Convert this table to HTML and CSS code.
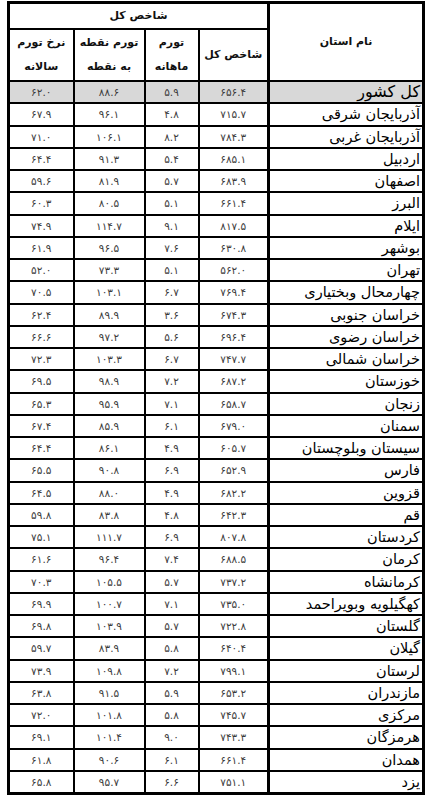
FILE: index.html
```html
<!DOCTYPE html>
<html lang="fa">
<head>
<meta charset="utf-8">
<title>شاخص کل</title>
<link rel="stylesheet" href="styles.css">
</head>
<body>
<table class="tbl" dir="rtl">
  <colgroup>
    <col class="c-name"><col class="c-idx"><col class="c-mon"><col class="c-pt"><col class="c-yr">
  </colgroup>
  <thead>
    <tr class="h1">
      <th class="h-name" rowspan="2">نام استان</th>
      <th colspan="4">شاخص کل</th>
    </tr>
    <tr class="h2">
      <th>شاخص کل</th>
      <th>تورم<br>ماهانه</th>
      <th>تورم نقطه<br>به نقطه</th>
      <th>نرخ تورم<br>سالانه</th>
    </tr>
  </thead>
  <tbody>
    <tr class="total"><td class="name">کل کشور</td><td>۶۵۶.۴</td><td>۵.۹</td><td>۸۸.۶</td><td>۶۲.۰</td></tr>
    <tr><td class="name">آذربایجان شرقی</td><td>۷۱۵.۷</td><td>۴.۸</td><td>۹۶.۱</td><td>۶۷.۹</td></tr>
    <tr><td class="name">آذربایجان غربی</td><td>۷۸۴.۳</td><td>۸.۲</td><td>۱۰۶.۱</td><td>۷۱.۰</td></tr>
    <tr><td class="name">اردبیل</td><td>۶۸۵.۱</td><td>۵.۴</td><td>۹۱.۳</td><td>۶۴.۴</td></tr>
    <tr><td class="name">اصفهان</td><td>۶۸۳.۹</td><td>۵.۷</td><td>۸۱.۹</td><td>۵۹.۶</td></tr>
    <tr><td class="name">البرز</td><td>۶۶۱.۴</td><td>۵.۱</td><td>۸۰.۵</td><td>۶۰.۳</td></tr>
    <tr><td class="name">ایلام</td><td>۸۱۷.۵</td><td>۹.۱</td><td>۱۱۴.۷</td><td>۷۴.۹</td></tr>
    <tr><td class="name">بوشهر</td><td>۶۳۰.۸</td><td>۷.۶</td><td>۹۶.۵</td><td>۶۱.۹</td></tr>
    <tr><td class="name">تهران</td><td>۵۶۲.۰</td><td>۵.۱</td><td>۷۳.۳</td><td>۵۲.۰</td></tr>
    <tr><td class="name">چهارمحال وبختیاری</td><td>۷۶۹.۴</td><td>۶.۷</td><td>۱۰۳.۱</td><td>۷۰.۵</td></tr>
    <tr><td class="name">خراسان جنوبی</td><td>۶۷۴.۳</td><td>۳.۶</td><td>۸۹.۹</td><td>۶۲.۴</td></tr>
    <tr><td class="name">خراسان رضوی</td><td>۶۹۶.۴</td><td>۵.۶</td><td>۹۷.۲</td><td>۶۶.۶</td></tr>
    <tr><td class="name">خراسان شمالی</td><td>۷۴۷.۷</td><td>۶.۷</td><td>۱۰۳.۳</td><td>۷۲.۳</td></tr>
    <tr><td class="name">خوزستان</td><td>۶۸۷.۲</td><td>۷.۲</td><td>۹۸.۹</td><td>۶۹.۵</td></tr>
    <tr><td class="name">زنجان</td><td>۶۵۸.۷</td><td>۷.۱</td><td>۹۵.۹</td><td>۶۵.۳</td></tr>
    <tr><td class="name">سمنان</td><td>۶۷۹.۰</td><td>۶.۱</td><td>۸۵.۹</td><td>۶۷.۴</td></tr>
    <tr><td class="name">سیستان وبلوچستان</td><td>۶۰۵.۷</td><td>۴.۹</td><td>۸۶.۱</td><td>۶۴.۴</td></tr>
    <tr><td class="name">فارس</td><td>۶۵۲.۹</td><td>۶.۹</td><td>۹۰.۸</td><td>۶۵.۵</td></tr>
    <tr><td class="name">قزوین</td><td>۶۸۲.۲</td><td>۴.۹</td><td>۸۸.۰</td><td>۶۴.۵</td></tr>
    <tr><td class="name">قم</td><td>۶۴۲.۳</td><td>۴.۸</td><td>۸۳.۸</td><td>۵۹.۸</td></tr>
    <tr><td class="name">کردستان</td><td>۸۰۷.۸</td><td>۶.۹</td><td>۱۱۱.۷</td><td>۷۵.۱</td></tr>
    <tr><td class="name">کرمان</td><td>۶۸۸.۵</td><td>۷.۴</td><td>۹۶.۴</td><td>۶۱.۶</td></tr>
    <tr><td class="name">کرمانشاه</td><td>۷۳۷.۲</td><td>۵.۷</td><td>۱۰۵.۵</td><td>۷۰.۳</td></tr>
    <tr><td class="name">کهگیلویه وبویراحمد</td><td>۷۳۵.۰</td><td>۷.۱</td><td>۱۰۰.۷</td><td>۶۹.۹</td></tr>
    <tr><td class="name">گلستان</td><td>۷۲۲.۸</td><td>۵.۷</td><td>۱۰۳.۹</td><td>۶۹.۸</td></tr>
    <tr><td class="name">گیلان</td><td>۶۴۰.۴</td><td>۵.۸</td><td>۸۳.۹</td><td>۵۹.۷</td></tr>
    <tr><td class="name">لرستان</td><td>۷۹۹.۱</td><td>۷.۲</td><td>۱۰۹.۸</td><td>۷۳.۹</td></tr>
    <tr><td class="name">مازندران</td><td>۶۵۳.۲</td><td>۵.۹</td><td>۹۱.۵</td><td>۶۳.۸</td></tr>
    <tr><td class="name">مرکزی</td><td>۷۴۵.۷</td><td>۵.۸</td><td>۱۰۱.۸</td><td>۷۲.۰</td></tr>
    <tr><td class="name">هرمزگان</td><td>۷۴۳.۳</td><td>۹.۰</td><td>۱۰۱.۴</td><td>۶۹.۱</td></tr>
    <tr><td class="name">همدان</td><td>۶۶۱.۴</td><td>۶.۱</td><td>۹۰.۶</td><td>۶۱.۸</td></tr>
    <tr><td class="name">یزد</td><td>۷۵۱.۱</td><td>۶.۶</td><td>۹۵.۷</td><td>۶۵.۸</td></tr>
  </tbody>
</table>
</body>
</html>
```

FILE: styles.css
```css
html, body {
  margin: 0;
  padding: 0;
  background: #ffffff;
}

body {
  padding: 1px 0 0 7px;
  font-family: "DejaVu Sans", sans-serif;
}

.tbl {
  border-collapse: collapse;
  table-layout: fixed;
  width: 415px;
  border: 3px solid #000;
  color: #111;
}

.c-name { width: 155px; }
.c-idx { width: 70px; }
.c-mon { width: 54px; }
.c-pt { width: 71px; }
.c-yr { width: 65px; }

.tbl th,
.tbl td {
  border: 2px solid #000;
  padding: 0;
  text-align: center;
  vertical-align: middle;
}

.tbl th {
  font-weight: bold;
  font-size: 11px;
  line-height: 24px;
  color: #111;
}

.h1 th { height: 23px; }
.h2 th { height: 50px; }

.tbl .h-name {
  border-left-width: 3px;
  font-size: 11px;
}

.tbl td {
  height: 20.25px;
  font-size: 10.5px;
  line-height: 14px;
  color: #3c3c3c;
}

.tbl td.name {
  text-align: right;
  padding-right: 2px;
  font-size: 14.5px;
  color: #000;
  border-left-width: 3px;
  white-space: nowrap;
}

.total td {
  background: #d8d8d8;
}

.tbl .total td.name {
  font-size: 16px;
}
```
